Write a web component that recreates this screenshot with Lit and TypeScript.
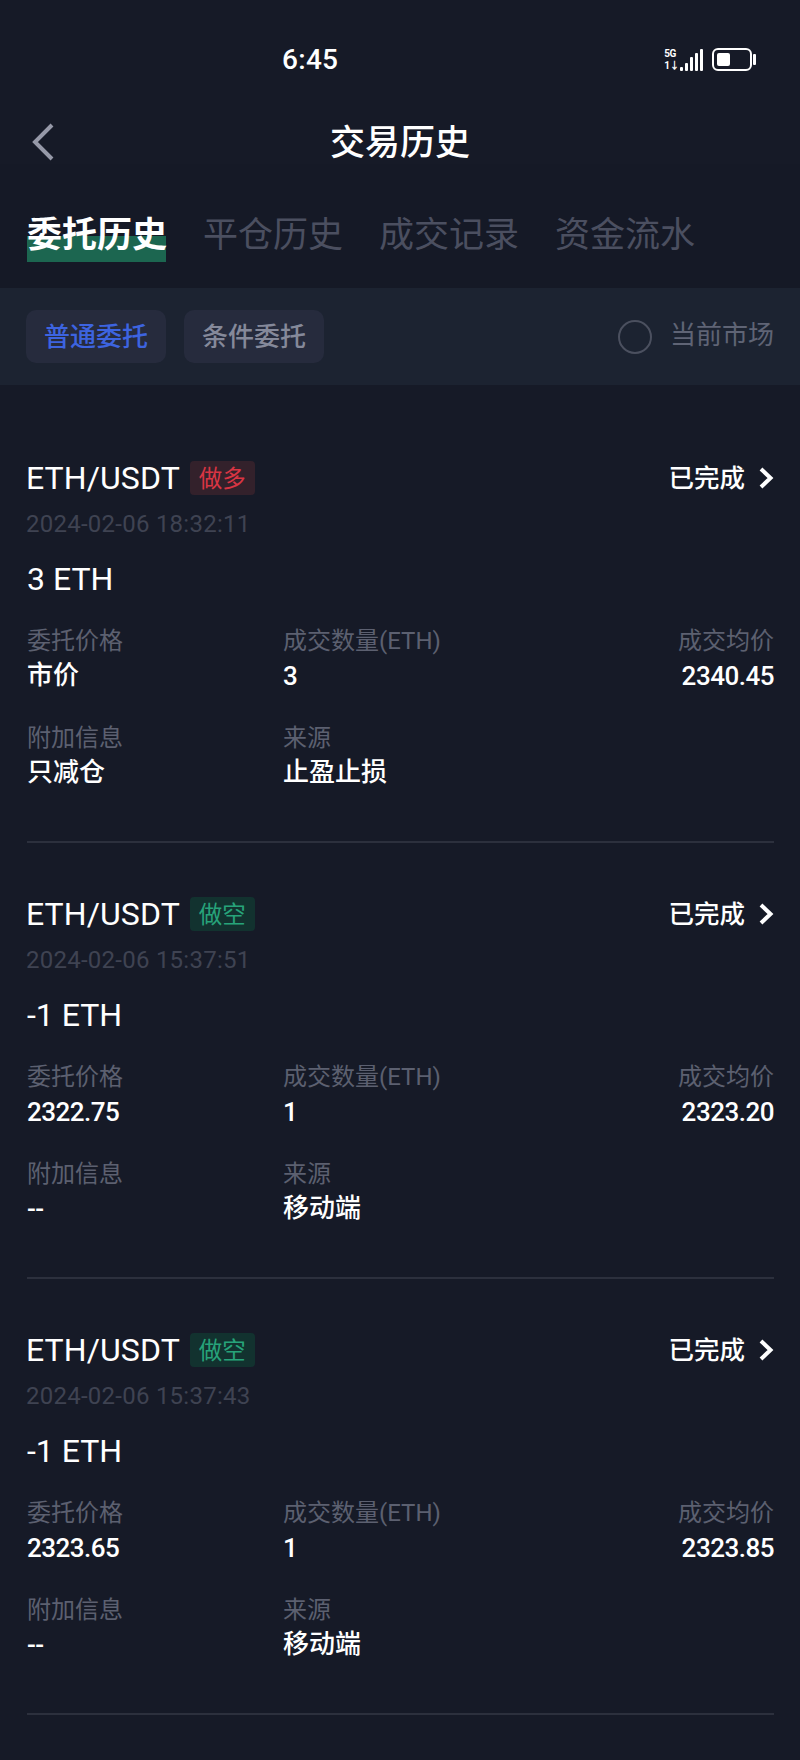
import { LitElement, css, html, svg } from "lit";
import { customElement } from "lit/decorators.js";

type Order = {
  side: "long" | "short";
  time: string;
  amount: string;
  price: string;
  filled: string;
  avg: string;
  extra: string;
  source: string;
};

const ORDERS: Order[] = [
  { side: "long", time: "2024-02-06 18:32:11", amount: "3 ETH", price: "市价", filled: "3", avg: "2340.45", extra: "只减仓", source: "止盈止损" },
  { side: "short", time: "2024-02-06 15:37:51", amount: "-1 ETH", price: "2322.75", filled: "1", avg: "2323.20", extra: "--", source: "移动端" },
  { side: "short", time: "2024-02-06 15:37:43", amount: "-1 ETH", price: "2323.65", filled: "1", avg: "2323.85", extra: "--", source: "移动端" },
];

const TABS = ["委托历史", "平仓历史", "成交记录", "资金流水"];

const signal = svg`
  <rect x="0" y="18" width="3" height="4" rx="1"/>
  <rect x="5" y="14" width="3" height="8" rx="1"/>
  <rect x="10" y="8" width="3" height="14" rx="1"/>
  <rect x="15" y="4" width="3" height="18" rx="1"/>
  <rect x="20" y="0" width="3" height="22" rx="1"/>
`;

const isCjk = (s: string) => /[\u4e00-\u9fff]/.test(s);

@customElement("app-root")
export class AppRoot extends LitElement {
  static styles = css`
    :host {
      display: block;
      width: 800px;
      height: 1760px;
      overflow: hidden;
      background: #161a27;
      color: #fff;
      font-family: Roboto, "Noto Sans CJK SC", sans-serif;
    }
    .status {
      height: 118px;
      display: flex;
      align-items: center;
      padding: 0 43px 0 282px;
      box-sizing: border-box;
    }
    .clock {
      font-size: 28px;
      font-weight: 500;
      letter-spacing: 0.3px;
    }
    .sys {
      margin-left: auto;
      display: flex;
      align-items: center;
      gap: 9px;
    }
    .net {
      display: flex;
      align-items: flex-end;
      gap: 1px;
      height: 23px;
    }
    .net-label {
      display: flex;
      flex-direction: column;
      justify-content: space-between;
      height: 23px;
      font-size: 10px;
      line-height: 11px;
      font-weight: 700;
      letter-spacing: -0.5px;
    }
    .net svg {
      fill: #fff;
      display: block;
    }
    .battery {
      display: block;
    }
    .nav {
      height: 46px;
      box-sizing: border-box;
      padding-bottom: 4px;
      position: relative;
      display: flex;
      align-items: center;
      justify-content: center;
      font-size: 35px;
      font-weight: 500;
    }
    .back {
      position: absolute;
      left: 32px;
      top: 5px;
    }
    .tabs {
      height: 124px;
      box-sizing: border-box;
      padding: 49px 0 0 27px;
      display: flex;
      gap: 37px;
      background: #151926;
    }
    .tab {
      font-size: 35px;
      line-height: 46px;
      height: 50px;
      width: 139px;
      color: #4b4f60;
      white-space: nowrap;
    }
    .tab.on {
      color: #fff;
      font-weight: 700;
      background: linear-gradient(#1c6650, #1c6650) no-repeat 0 23px / 140px 26px;
    }
    .filter {
      height: 97px;
      box-sizing: border-box;
      background: #1c2331;
      display: flex;
      align-items: center;
      padding: 0 26px;
      gap: 18px;
    }
    .chip {
      width: 140px;
      height: 53px;
      box-sizing: border-box;
      padding-bottom: 5px;
      border-radius: 10px;
      background: #262b3d;
      display: flex;
      align-items: center;
      justify-content: center;
      font-size: 26px;
      font-weight: 500;
      color: #85899a;
    }
    .chip.on {
      color: #3d64e0;
    }
    .market {
      margin-left: auto;
      display: flex;
      align-items: center;
      gap: 18px;
      font-size: 26px;
      line-height: 34px;
      color: #5f6475;
    }
    .market span:last-child {
      margin-top: -4px;
    }
    .radio {
      width: 34px;
      height: 34px;
      border-radius: 50%;
      border: 2px solid #4b505f;
      box-sizing: border-box;
    }
    .list {
      padding: 22px 26px 0 27px;
    }
    .card {
      padding: 51px 0 51px;
      border-bottom: 2px solid #2c303d;
    }
    .head {
      height: 40px;
      display: flex;
      align-items: center;
    }
    .pair {
      font-size: 32px;
      font-weight: 400;
      margin-left: -1px;
      letter-spacing: 0.1px;
    }
    .tag {
      margin-left: 10px;
      width: 65px;
      height: 34px;
      box-sizing: border-box;
      padding-bottom: 2px;
      border-radius: 4px;
      display: flex;
      align-items: center;
      justify-content: center;
      font-size: 23.5px;
    }
    .tag.long {
      background: #33212b;
      color: #d93543;
    }
    .tag.short {
      background: #12322f;
      color: #27a37a;
    }
    .state {
      margin-left: auto;
      display: flex;
      align-items: center;
      gap: 14px;
      font-size: 25.5px;
      font-weight: 500;
    }
    .state span {
      padding-bottom: 6px;
    }
    .time {
      margin-top: 10px;
      height: 32px;
      line-height: 32px;
      font-size: 24px;
      color: #3f4352;
      letter-spacing: 0.25px;
      margin-left: -1px;
    }
    .amount {
      margin-top: 19px;
      height: 40px;
      line-height: 40px;
      font-size: 32px;
    }
    .grid {
      margin-top: 25px;
      display: grid;
      grid-template-columns: 256px 1fr auto;
      row-gap: 28px;
    }
    .label {
      font-size: 24px;
      line-height: 34px;
      color: #5c6070;
    }
    .value {
      font-size: 26px;
      letter-spacing: -0.5px;
      line-height: 34px;
      padding-top: 1px;
      font-weight: 500;
    }
    .value.cjk {
      letter-spacing: 0;
      padding: 0 0 1px;
    }
    .end {
      text-align: right;
    }
  `;

  private val(v: string) {
    return html`<div class="value ${isCjk(v) ? "cjk" : ""}">${v}</div>`;
  }

  private order(o: Order) {
    return html`
      <div class="card">
        <div class="head">
          <span class="pair">ETH/USDT</span>
          <span class="tag ${o.side}">${o.side === "long" ? "做多" : "做空"}</span>
          <div class="state">
            <span>已完成</span>
            <svg width="15" height="22" viewBox="0 0 15 22" fill="none" stroke="#fff" stroke-width="4">
              <path d="M2 2l9.5 9-9.5 9" />
            </svg>
          </div>
        </div>
        <div class="time">${o.time}</div>
        <div class="amount">${o.amount}</div>
        <div class="grid">
          <div>
            <div class="label">委托价格</div>
            ${this.val(o.price)}
          </div>
          <div>
            <div class="label">成交数量(ETH)</div>
            ${this.val(o.filled)}
          </div>
          <div class="end">
            <div class="label">成交均价</div>
            ${this.val(o.avg)}
          </div>
          <div>
            <div class="label">附加信息</div>
            ${this.val(o.extra)}
          </div>
          <div>
            <div class="label">来源</div>
            ${this.val(o.source)}
          </div>
        </div>
      </div>
    `;
  }

  render() {
    return html`
      <div class="status">
        <span class="clock">6:45</span>
        <div class="sys">
          <div class="net">
            <div class="net-label"><span>5G</span><span>1↓</span></div>
            <svg width="23" height="22" viewBox="0 0 23 22">${signal}</svg>
          </div>
          <svg class="battery" width="45" height="23" viewBox="0 0 45 23">
            <rect x="1" y="1" width="38" height="21" rx="5" fill="none" stroke="#fff" stroke-width="2" />
            <rect x="5" y="5" width="13" height="13" rx="2" fill="#fff" />
            <rect x="41" y="6" width="3" height="11" rx="1" fill="#fff" />
          </svg>
        </div>
      </div>
      <div class="nav">
        <svg class="back" width="24" height="38" viewBox="0 0 24 38" fill="none" stroke="#9699a8" stroke-width="4">
          <path d="M20 2L3 19l17 17" />
        </svg>
        交易历史
      </div>
      <div class="tabs">
        ${TABS.map((t, i) => html`<div class="tab ${i === 0 ? "on" : ""}">${t}</div>`)}
      </div>
      <div class="filter">
        <div class="chip on">普通委托</div>
        <div class="chip">条件委托</div>
        <div class="market"><span class="radio"></span><span>当前市场</span></div>
      </div>
      <div class="list">${ORDERS.map((o) => this.order(o))}</div>
    `;
  }
}
